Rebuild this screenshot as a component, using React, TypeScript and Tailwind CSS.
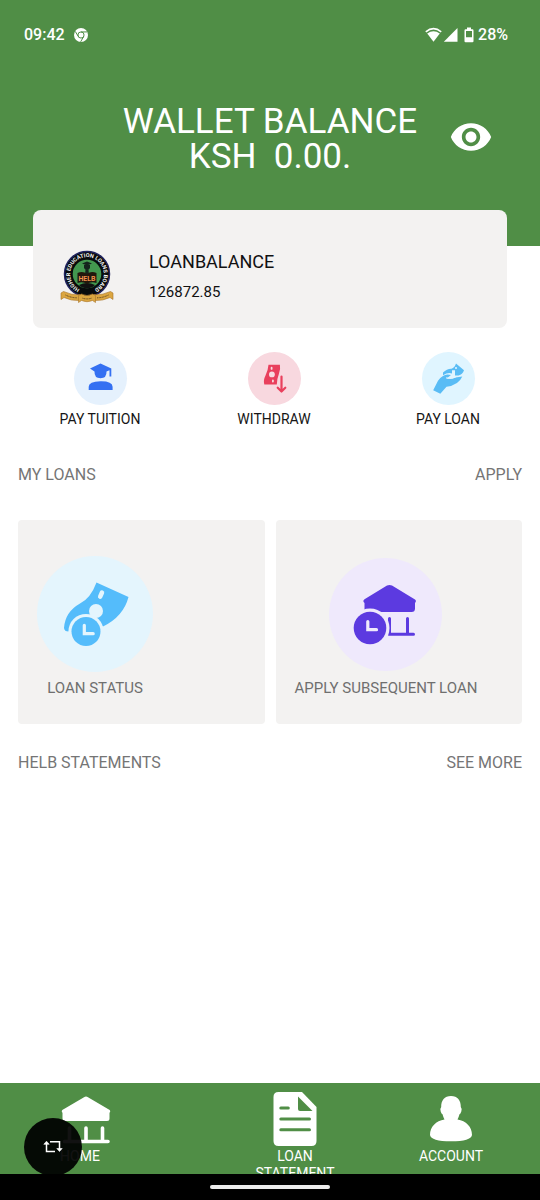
import { useState } from 'react';
import type { ReactNode } from 'react';
import { MdVisibility } from 'react-icons/md';

const StatusBar = () => (
  <div className="flex h-5 items-center justify-between pl-6 pr-8 text-[16px] font-medium">
    <div className="flex items-center gap-2">
      <span>09:42</span>
      <svg viewBox="0 0 24 24" className="h-4 w-4" aria-hidden="true">
        <circle cx="12" cy="12" r="10.5" fill="#fff" />
        <g fill="none" stroke="#508e46" strokeWidth="1.5">
          <circle cx="12" cy="12" r="4.6" />
          <path d="M12 7.4H21M8 14.3 3.4 6.6M16 14.3l-4.6 8" />
        </g>
      </svg>
    </div>
    <div className="flex items-center">
      <svg viewBox="0 0 17 16" className="h-4 w-[17px]" aria-hidden="true">
        <path d="M.8 4.800Q8.500-1.500 16.200 4.800" fill="none" stroke="#fff" strokeWidth="1.600" />
        <path d="M2.200 6.600Q8.500 2 14.800 6.600L8.500 14.800Z" fill="#fff" />
      </svg>
      <svg viewBox="0 0 15 16" className="ml-px h-4 w-[15px]" aria-hidden="true">
        <path d="M14.500 1V14.800H.8Z" fill="#fff" />
      </svg>
      <svg viewBox="0 0 10 16" className="ml-1.5 h-4 w-2.5" aria-hidden="true">
        <path
          d="M3 .6H7V2.300H8.400Q9.500 2.300 9.500 3.400V14.200Q9.500 15.300 8.400 15.300H1.600Q.5 15.300.5 14.200V3.400Q.5 2.300 1.600 2.300H3ZM2 4V10.200H8V4Z"
          fill="#fff"
          fillRule="evenodd"
        />
      </svg>
      <span className="ml-1">28%</span>
    </div>
  </div>
);

const BoardLogo = () => (
  <svg viewBox="0 0 54 54" className="h-[54px] w-[54px] shrink-0" role="img" aria-label="HELB">
    <defs>
      <path id="logo-ring" d="M19.300 38.900A16.800 16.800 0 1 1 34.700 38.900" />
    </defs>
    <circle cx="27" cy="24" r="22.500" fill="#080b0c" stroke="#20245f" strokeWidth="1.500" />
    <circle cx="27" cy="24" r="14.300" fill="#43984f" />
    <path d="M19 35Q27 31 35 35Q32 38.300 27 38.300T19 35Z" fill="#111" />
    <text fontSize="5.500" fontWeight="700" fill="#f5f5f5" textAnchor="middle">
      <textPath href="#logo-ring" startOffset="50%">
        HIGHER EDUCATION LOANS BOARD
      </textPath>
    </text>
    <path d="M22 13.500 27 11.500 32 13.500 27 15.500ZM24 15H30V18Q29 20 27 20T24 18Z" fill="#14251d" />
    <path d="M25.500 19.500H28.500L29 25H25Z" fill="#14251d" />
    <path d="M17.500 23Q23 20.500 27 24Q31 20.500 36.500 23V33Q31 31 27 34Q23 31 17.500 33Z" fill="#23180d" />
    <text x="27" y="30.500" textAnchor="middle" fontSize="7" fontWeight="700" fill="#ef8f4c">
      HELB
    </text>
    <g fill="#dba640" stroke="#a8732a" strokeWidth=".6">
      <path d="M1 43 3.500 41.500Q12 45.500 20 44.500V50.500Q11 51 4 47.500L1 49.500Z" />
      <path d="M53 43 50.500 41.500Q42 45.500 34 44.500V50.500Q43 51 50 47.500L53 49.500Z" />
      <path d="M18.500 45.500 21.500 44Q27 47 32.500 44L35.500 45.500V52.500L32.500 50.500Q27 53 21.500 50.500L18.500 52.500Z" />
    </g>
    <g fill="none" stroke="#5a4020" strokeWidth="1" strokeDasharray="1 .6">
      <path d="M5.500 45Q11 47.800 17 47.800" />
      <path d="M22.500 48.200Q27 49.600 31.500 48.200" />
      <path d="M37 47.800Q43 47.800 48.500 45" />
    </g>
  </svg>
);

const TuitionIcon = () => (
  <svg viewBox="0 0 53 53" className="h-full w-full" aria-hidden="true">
    <g fill="#3470f2">
      <path d="M26.500 11.500 37.300 16.600V24.500H35.500V18.300L32.500 19.500Q32.800 26.300 26.500 26.300T20.500 19.500L16 16.600Z" />
      <path d="M14.700 38V34.800Q14.700 29.500 26.500 29.300T38.600 34.800V38Z" />
    </g>
  </svg>
);

const WithdrawIcon = () => (
  <svg viewBox="0 0 53 53" className="h-full w-full" aria-hidden="true">
    <path d="M20.500 12.700H31.900Q32.800 17.200 30.800 22.300T28.800 32.400H16.300Q15 28.500 17.500 23.500T20.500 12.700Z" fill="#e9405d" />
    <g fill="#f7dce1">
      <circle cx="23.900" cy="22.400" r="2.900" />
      <rect x="22.700" y="14.800" width="1.800" height="3" rx=".9" />
      <rect x="24" y="27.500" width="1.800" height="3" rx=".9" />
    </g>
    <path d="M33.500 24.500V39M29.700 35.700 33.500 39.500 37.300 35.700" fill="none" stroke="#e9405d" strokeWidth="2.200" strokeLinecap="round" strokeLinejoin="round" />
  </svg>
);

const PayLoanIcon = () => (
  <svg viewBox="0 0 53 53" className="h-full w-full" aria-hidden="true">
    <path d="M21 20.500Q25 16.500 29.500 16.700Q32.500 16 34 11.500L42 18.300Q40.500 22.500 36.500 23.500H33V18.300H30V21.500Q26 20 21 23.300Z" fill="#59bcf5" />
    <path d="M11.200 38.200 16 28.700Q20.500 22.700 25.500 22.500L29 23L24.500 26.500Q30 27.300 33.500 25.500L40.300 24.600Q36.500 33.500 24.500 34.700L18.300 41.700Z" fill="#59bcf5" />
    <circle cx="34" cy="16" r="1" fill="#e4f6ff" />
    <path d="M24 25.900Q30 27.500 34 24.800" fill="none" stroke="#e4f6ff" strokeWidth="1" />
  </svg>
);

const LoanStatusIcon = () => (
  <svg viewBox="0 0 116 116" className="h-[116px] w-[116px]" aria-hidden="true">
    <circle cx="58" cy="58" r="58" fill="#e4f5fd" />
    <path d="M59.500 26.500 91.500 41Q86.500 60.500 66 70.500L62.500 68.500Q60 64 48 61Q36 64 32.500 75.500Q27.500 76 27 72Q28 56 43 47.500Q53.500 42.500 59.500 26.500Z" fill="#54bcfb" />
    <circle cx="59" cy="55" r="7" fill="#e4f5fd" />
    <path d="m65 36.500-1.800 4.200" stroke="#e4f5fd" strokeWidth="4.500" strokeLinecap="round" />
    <circle cx="49" cy="75.500" r="17.600" fill="#e4f5fd" />
    <circle cx="49" cy="75.500" r="14.500" fill="#54bcfb" />
    <path d="M47.300 69.300V77.700H56.200" fill="none" stroke="#e4f5fd" strokeWidth="3.200" strokeLinecap="round" />
  </svg>
);

const ApplyLoanIcon = () => (
  <svg viewBox="0 0 113 113" className="h-[113px] w-[113px]" aria-hidden="true">
    <circle cx="56.500" cy="56.500" r="56.500" fill="#efe9fc" />
    <path d="M58 27.600Q60.500 26.300 63 27.600L86 41.500Q87.800 42.800 86 45V50.500Q86 54 82.500 54H35.500V45Q33.200 43 35.500 41.200Z" fill="#5c3ae0" />
    <path d="M60.500 60.500V76M78.500 60.500V76M60 76.300H84.500" fill="none" stroke="#5c3ae0" strokeWidth="3" strokeLinecap="round" />
    <circle cx="41" cy="70" r="19.500" fill="#efe9fc" />
    <circle cx="41" cy="70" r="16.300" fill="#5c3ae0" />
    <path d="M38.800 63.500V71.700H47.500" fill="none" stroke="#efe9fc" strokeWidth="3.200" strokeLinecap="round" />
  </svg>
);

const HomeIcon = () => (
  <svg viewBox="0 0 50 54" className="h-[54px] w-[50px] shrink-0" fill="#fff" aria-hidden="true">
    <path d="M23 5.300Q25 3.800 27 5.300L48.700 18Q50 19 48.500 21V26.500Q48.500 29 46 29H4Q1.500 29 1.500 26.500V21Q0 19 1.300 18Z" />
    <path d="M8.500 36V49M25 36V49M41.500 36V49M3.500 49.500H47" fill="none" stroke="#fff" strokeWidth="3.600" strokeLinecap="round" />
  </svg>
);

const StatementIcon = () => (
  <svg viewBox="0 0 44 54" className="h-[54px] w-11 shrink-0" aria-hidden="true">
    <path d="M5.500 0H29L43.500 15V49Q43.500 54 38.500 54H5.500Q.5 54 .5 49V5Q.5 0 5.500 0Z" fill="#fff" />
    <path d="M25 4.500V17Q25 19 27 19H39.500Z" fill="#508e46" />
    <path d="M7.800 16H15.300M7.800 27H36.500M7.800 37.800H36.500" stroke="#508e46" strokeWidth="3" strokeLinecap="round" />
  </svg>
);

const AccountIcon = () => (
  <svg viewBox="0 0 44 54" className="h-[54px] w-11 shrink-0" fill="#fff" aria-hidden="true">
    <path d="M22 4C28.500 4 32 8.500 31.800 15Q33.300 16.500 32.300 19.500Q31.500 22 30.500 22.300Q29.800 25 28.500 27.500C37 29 43 34.500 43 43Q42 49.300 22 49.300T1 43C1 34.500 7 29 15.500 27.500Q14.200 25 13.500 22.300Q12.500 22 11.700 19.500Q10.700 16.500 12.200 15C12 8.500 15.500 4 22 4Z" />
  </svg>
);

const ActionButton = ({ label, circle, children }: { label: string; circle: string; children: ReactNode }) => (
  <button type="button" className="flex flex-col items-center gap-1">
    <span className={`h-[53px] w-[53px] rounded-full ${circle}`}>{children}</span>
    <span className="text-[14px] leading-5 text-[#161616]">{label}</span>
  </button>
);

const SectionRow = ({ title, link }: { title: string; link: string }) => (
  <div className="flex justify-between px-[18px] text-[16px] leading-5 text-[#757575]">
    <h2>{title}</h2>
    <a href="#">{link}</a>
  </div>
);

const LoanCard = ({ label, children }: { label: string; children: ReactNode }) => (
  <button type="button" className="flex justify-start rounded-[4px] bg-[#f3f2f1] pb-[26px] pl-[19px] pt-9">
    <span className="flex flex-col items-center gap-1.5">
      <span className="flex h-[116px] items-center">{children}</span>
      <span className="text-[15px] leading-5 text-[#6f6f6f]">{label}</span>
    </span>
  </button>
);

const NavItem = ({ label, labelClass = '', children }: { label: string; labelClass?: string; children: ReactNode }) => (
  <a href="#" className="flex flex-1 flex-col items-center">
    {children}
    <span className={`mt-0.5 max-w-[90px] text-center text-[14px] leading-[17px] ${labelClass}`}>{label}</span>
  </a>
);

export default function App() {
  const [hidden, setHidden] = useState(false);

  return (
    <div className="flex min-h-screen flex-col bg-white font-['Roboto',sans-serif]">
      <header className="bg-[#508e46] pb-[72px] pt-[25px] text-white">
        <StatusBar />
        <div className="mt-[59px] grid grid-cols-[1fr_auto_1fr] items-center">
          <h1 className="col-start-2 whitespace-pre text-center text-[35px] leading-[35px]">
            WALLET BALANCE
            <br />
            {hidden ? 'KSH  ****' : 'KSH  0.00.'}
          </h1>
          <button
            type="button"
            aria-label="Toggle balance"
            onClick={() => setHidden(!hidden)}
            className="mr-[47px] justify-self-end pb-1"
          >
            <MdVisibility className="h-11 w-11" />
          </button>
        </div>
      </header>

      <main className="flex-1">
        <section className="relative mx-[33px] -mt-9 flex items-center gap-[35px] rounded-lg bg-[#f3f2f1] pb-[21px] pl-[27px] pt-[37px] text-[#111]">
          <BoardLogo />
          <div>
            <h2 className="text-[18px] leading-[30px]">LOANBALANCE</h2>
            <p className="text-[15px] leading-[30px]">126872.85</p>
          </div>
        </section>

        <div className="mt-6 grid grid-cols-3 pl-[13px] pr-[5px]">
          <ActionButton label="PAY TUITION" circle="bg-[#e5f1fd]">
            <TuitionIcon />
          </ActionButton>
          <ActionButton label="WITHDRAW" circle="bg-[#f8d8df]">
            <WithdrawIcon />
          </ActionButton>
          <ActionButton label="PAY LOAN" circle="bg-[#e0f5ff]">
            <PayLoanIcon />
          </ActionButton>
        </div>

        <div className="mt-9">
          <SectionRow title="MY LOANS" link="APPLY" />
        </div>
        <div className="mt-[35px] grid grid-cols-2 gap-[11px] px-[18px]">
          <LoanCard label="LOAN STATUS">
            <LoanStatusIcon />
          </LoanCard>
          <LoanCard label="APPLY SUBSEQUENT LOAN">
            <ApplyLoanIcon />
          </LoanCard>
        </div>
        <div className="mt-[29px]">
          <SectionRow title="HELB STATEMENTS" link="SEE MORE" />
        </div>
      </main>

      <footer className="relative bg-black">
        <nav className="flex h-[91px] overflow-hidden bg-[#508e46] pl-2 pr-[11px] pt-[9px] text-white">
          <NavItem label="HOME" labelClass="pr-3">
            <HomeIcon />
          </NavItem>
          <div className="w-[53px]" />
          <NavItem label="LOAN STATEMENT">
            <StatementIcon />
          </NavItem>
          <NavItem label="ACCOUNT">
            <AccountIcon />
          </NavItem>
        </nav>
        <div className="flex h-[26px] items-center justify-center">
          <div className="h-1 w-[120px] rounded-full bg-[#ececec]" />
        </div>
        <button
          type="button"
          aria-label="Rotate screen"
          className="absolute bottom-6 left-6 flex h-[58px] w-[58px] items-center justify-center rounded-full bg-black/93"
        >
          <svg viewBox="0 0 20 14" className="h-3.5 w-5" aria-hidden="true">
            <path d="M3.500 3.500V11.500H12M7 1.800H16.500V9.500" fill="none" stroke="#fff" strokeWidth="1.500" />
            <path d="M.8 4.300 3.500 1.200 6.200 4.300ZM13.800 8.500H19.200L16.500 11.500Z" fill="#fff" stroke="#fff" strokeWidth=".6" />
          </svg>
        </button>
      </footer>
    </div>
  );
}
